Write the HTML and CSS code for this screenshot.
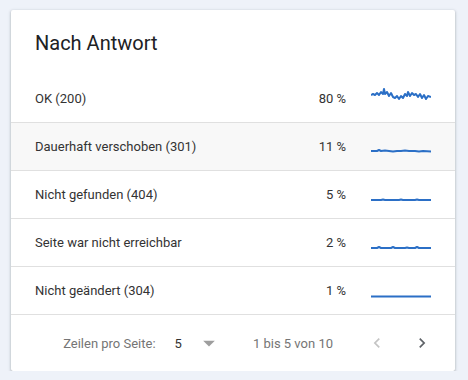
FILE: index.html
```html
<!DOCTYPE html>
<html lang="de">
<head>
<meta charset="utf-8">
<link rel="stylesheet" href="styles.css">
</head>
<body>
<div class="card">
  <div class="title">Nach Antwort</div>
  <div class="row">
    <span class="name">OK (200)</span>
    <span class="pct">80 %</span>
    <svg class="spark" viewBox="0 0 60 24" width="60" height="24"><polyline points="0,8 2,7 4,8 6,6 8,8 10,5 12,7 13,2 14,7 16,5 18,9 20,6 22,10 24,11 26,9 28,12 30,9 32,11 34,7 36,9 37,5 39,9 41,6 43,8 45,7 47,10 49,7 51,11 53,8 55,12 57,9 60,10"/></svg>
  </div>
  <div class="row hover">
    <span class="name">Dauerhaft verschoben (301)</span>
    <span class="pct">11 %</span>
    <svg class="spark" viewBox="0 0 60 24" width="60" height="24"><polyline points="0,16 6,16 8,15 10,16 14,15.5 18,16 22,16.5 26,16 30,16 34,15.5 38,16 44,16 48,16.5 52,16 60,16.5"/></svg>
  </div>
  <div class="row">
    <span class="name">Nicht gefunden (404)</span>
    <span class="pct">5 %</span>
    <svg class="spark" viewBox="0 0 60 24" width="60" height="24"><polyline points="0,17 10,17 12,16.5 14,17 28,17 30,16.5 32,17 44,17 46,16.5 48,17 60,17"/></svg>
  </div>
  <div class="row">
    <span class="name">Seite war nicht erreichbar</span>
    <span class="pct">2 %</span>
    <svg class="spark" viewBox="0 0 60 24" width="60" height="24"><polyline points="0,17 6,17 8,16 10,17 20,17 22,16 24,17 34,17 36,16.5 38,17 44,17 46,16 48,17 60,17"/></svg>
  </div>
  <div class="row">
    <span class="name">Nicht geändert (304)</span>
    <span class="pct">1 %</span>
    <svg class="spark" viewBox="0 0 60 24" width="60" height="24"><polyline points="0,17.5 60,17.5"/></svg>
  </div>
  <div class="footer">
    <span class="label">Zeilen pro Seite:</span>
    <span class="select">5</span>
    <svg class="drop" viewBox="0 0 24 24" width="28" height="28"><path d="M7 10l5 5 5-5z"/></svg>
    <span class="range">1 bis 5 von 10</span>
    <svg class="chev prev" viewBox="0 0 24 24" width="20" height="20"><path d="M15.41 7.41L14 6l-6 6 6 6 1.41-1.41L10.83 12z"/></svg>
    <svg class="chev next" viewBox="0 0 24 24" width="20" height="20"><path d="M10 6L8.59 7.41 13.17 12l-4.58 4.59L10 18l6-6z"/></svg>
  </div>
</div>
</body>
</html>
```
FILE: styles.css
```css
html, body {
  margin: 0;
  padding: 0;
}
body {
  background: #eef2f9;
  font-family: Roboto, "Liberation Sans", Arial, sans-serif;
  padding: 10px 0 0 11px;
}
.card {
  width: 444px;
  background: #fff;
  border-radius: 2px;
  box-shadow: 0 1px 2px rgba(60, 64, 67, 0.3), 0 1px 3px 1px rgba(60, 64, 67, 0.12);
  display: flex;
  flex-direction: column;
}
.title {
  height: 65px;
  box-sizing: border-box;
  padding: 19px 24px 0;
  font-size: 20px;
  line-height: 28px;
  color: #202124;
}
.row {
  height: 48px;
  box-sizing: border-box;
  border-bottom: 1px solid #e0e0e0;
  padding: 0 24px;
  display: grid;
  grid-template-columns: 1fr auto 60px;
  column-gap: 25px;
  align-items: center;
  font-size: 13px;
  color: #333;
}
.row.hover {
  background: #f8f8f8;
}
.pct {
  text-align: right;
}
.spark {
  display: block;
}
.spark polyline {
  fill: none;
  stroke: #2b6fc6;
  stroke-width: 2;
  stroke-linejoin: round;
}
.footer {
  height: 56px;
  display: flex;
  align-items: center;
  justify-content: flex-end;
  padding-right: 23px;
  font-size: 13px;
  color: #757575;
}
.select {
  margin-left: 19px;
  color: #333;
}
.drop {
  margin-left: 13px;
  fill: #9e9e9e;
}
.range {
  margin-left: 30px;
}
.chev {
  display: block;
}
.prev {
  margin-left: 34px;
  fill: #c4c4c4;
}
.next {
  margin-left: 25px;
  fill: #5f6368;
}
```
